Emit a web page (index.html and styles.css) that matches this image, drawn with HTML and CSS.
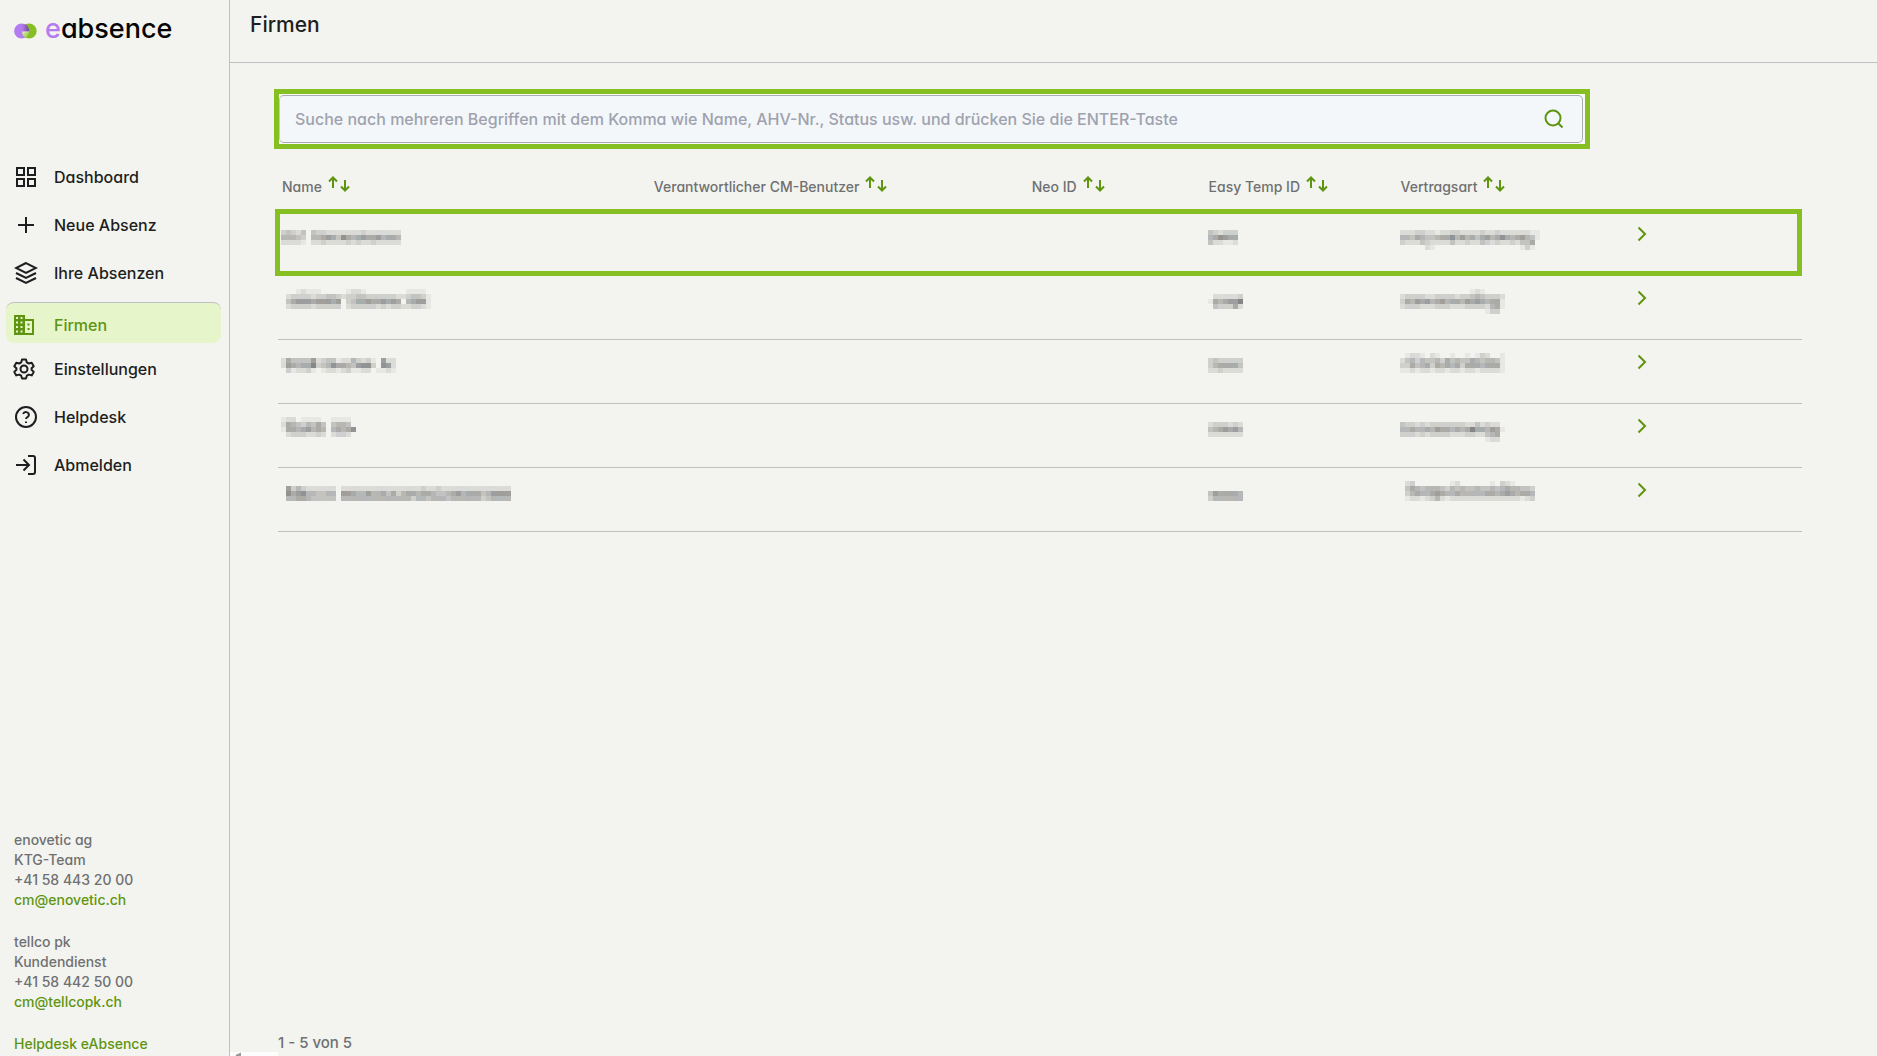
FILE: index.html
```html
<!DOCTYPE html>
<html lang="de">
<head>
<meta charset="utf-8">
<meta name="viewport" content="width=device-width, initial-scale=1">
<title>Firmen – eabsence</title>
<link rel="stylesheet" href="styles.css">
</head>
<body>
<svg class="defs" aria-hidden="true">
  <symbol id="sort" viewBox="0 0 22 16">
    <path d="M5 12V1.500M1 5.500l4-4 4 4M17 4v10.500M13 10.500l4 4 4-4" fill="none" stroke="currentColor" stroke-width="2"/>
  </symbol>
  <symbol id="chevron" viewBox="0 0 10 16">
    <path d="M1.500 1.500L8 8l-6.500 6.500" fill="none" stroke="currentColor" stroke-width="2"/>
  </symbol>
</svg>
<div class="app">
  <aside class="sidebar">
    <a class="logo" href="#" aria-label="eabsence">
      <svg class="logo-mark" viewBox="0 0 23 16" aria-hidden="true">
        <defs>
          <linearGradient id="shade" x1="0" y1="0" x2="1" y2="0"><stop offset="0" stop-color="#b57bf0"/><stop offset="1" stop-color="#6d4a8c"/></linearGradient>
          <linearGradient id="shine" x1="0" y1="0" x2="1" y2="1"><stop offset="0" stop-color="#e4f0c4"/><stop offset="1" stop-color="#86bf21"/></linearGradient>
        </defs>
        <circle cx="15.200" cy="8" r="7.500" fill="#86bf21"/>
        <circle cx="7.600" cy="8" r="7.500" fill="#b57bf0"/>
        <path d="M8 8V1.500h4Q15 4 15 8z" fill="url(#shade)"/>
        <path d="M8 8.500h7q0 4-3.500 6.500Q8 12.500 8 8.500z" fill="url(#shine)"/>
      </svg>
      <span class="logo-text"><span class="logo-e">e</span>absence</span>
    </a>
    <nav class="nav">
      <a class="nav-item" href="#"><svg class="nav-icon" viewBox="0 0 24 24"><path d="M3 3h7v7H3zM14 3h7v7h-7zM14 14h7v7h-7zM3 14h7v7H3z"/></svg>Dashboard</a>
      <a class="nav-item" href="#"><svg class="nav-icon" viewBox="0 0 24 24"><path d="M12 4v16M4 12h16"/></svg>Neue Absenz</a>
      <a class="nav-item" href="#"><svg class="nav-icon" viewBox="0 0 24 24"><path d="M12 2L2 7l10 5 10-5zM2 17l10 5 10-5M2 12l10 5 10-5"/></svg>Ihre Absenzen</a>
      <a class="nav-item active" href="#" aria-current="page"><svg class="nav-icon wide-left" viewBox="0 0 24 24"><path class="solid" fill-rule="evenodd" d="M2 2h11v4h9v16H2zM4 4v2h2V4zM8.500 4v2h2V4zM4 8.500v2h2v-2zM8.500 8.500v2h2v-2zM4 13v2h2v-2zM8.500 13v2h2v-2zM4 17.500v2h2v-2zM8.500 17.500v2h2v-2zM13 8v12h7V8zM15.500 10.500h2v2h-2zM15.500 15h2v2h-2z"/></svg>Firmen</a>
      <a class="nav-item" href="#"><svg class="nav-icon wide-left" viewBox="0 0 24 24"><circle cx="12" cy="12" r="3.500"/><path d="M10 2.500h4l.8 2.900 2 1.100 2.900-.8 2 3.500-2.100 2.100v1.500l2.100 2.100-2 3.500-2.900-.8-2 1.100-.8 2.800h-4l-.8-2.800-2-1.100-2.900.8-2-3.500 2.100-2.100v-1.500L2.300 9.200l2-3.500 2.900.8 2-1.100z" stroke-linejoin="round"/></svg>Einstellungen</a>
      <a class="nav-item" href="#"><svg class="nav-icon" viewBox="0 0 24 24"><circle cx="12" cy="12" r="10"/><path d="M9.100 9a3 3 0 0 1 5.800 1c0 2-2.900 2.500-2.900 4M12 16.500v1.500"/></svg>Helpdesk</a>
      <a class="nav-item" href="#"><svg class="nav-icon" viewBox="0 0 24 24"><path d="M14 3h5a2 2 0 0 1 2 2v14a2 2 0 0 1-2 2h-5M9.500 6.500L15 12l-5.500 5.500M2 12h13"/></svg>Abmelden</a>
    </nav>
    <footer class="contacts">
      <address>enovetic ag<br>KTG-Team<br>+41 58 443 20 00<br><a href="mailto:cm@enovetic.ch">cm@enovetic.ch</a></address>
      <address>tellco pk<br>Kundendienst<br>+41 58 442 50 00<br><a href="mailto:cm@tellcopk.ch">cm@tellcopk.ch</a></address>
      <a href="#">Helpdesk eAbsence</a>
    </footer>
  </aside>
  <div class="main">
    <header class="topbar"><h1>Firmen</h1></header>
    <main class="content">
      <form class="search" role="search">
        <div class="search-field">
          <input type="search" aria-label="Suche" placeholder="Suche nach mehreren Begriffen mit dem Komma wie Name, AHV-Nr., Status usw. und drücken Sie die ENTER-Taste">
          <button class="search-button" type="submit" aria-label="Suchen"><svg viewBox="0 0 20 20"><circle cx="9" cy="9" r="7.500"/><path d="M14.500 14.500l4 4"/></svg></button>
        </div>
      </form>
      <table class="firms">
        <colgroup><col class="c-name"><col class="c-user"><col class="c-neo"><col class="c-easy"><col class="c-type"><col></colgroup>
        <thead>
          <tr>
            <th><button type="button">Name<svg><use href="#sort"/></svg></button></th>
            <th><button type="button">Verantwortlicher CM-Benutzer<svg><use href="#sort"/></svg></button></th>
            <th><button type="button">Neo ID<svg><use href="#sort"/></svg></button></th>
            <th><button type="button">Easy Temp ID<svg><use href="#sort"/></svg></button></th>
            <th><button type="button">Vertragsart<svg><use href="#sort"/></svg></button></th>
            <th></th>
          </tr>
        </thead>
        <tbody>
          <tr class="marked">
            <td><svg class="mosaic" data-cells="/343240433222222232222222/555430556764865676675665/222210223222232322322222"></svg></td><td></td><td></td>
            <td><svg class="mosaic" data-cells="/432333/568766/422112"></svg></td>
            <td><svg class="mosaic" data-cells="/2223322122332222322322222211/5546544566857564675686567541/3222432222422322432322324460/0000021000000000000000001310"></svg></td>
            <td><button class="open" type="button" aria-label="Firma öffnen"><svg><use href="#chevron"/></svg></button></td>
          </tr>
          <tr>
            <td><svg class="mosaic" data-cells="000121110000012210000000011110/023333233443233443333332234431/046777677767034667667676056771/023333233333023333323233223321"></svg></td><td></td><td></td>
            <td><svg class="mosaic" data-cells="/0222223/1656779/0433362"></svg></td>
            <td><svg class="mosaic" data-cells="000000000000001210000/233332233332334543332/365767567566576765661/233322233322233332561/000000000000000001330"></svg></td>
            <td><button class="open" type="button" aria-label="Firma öffnen"><svg><use href="#chevron"/></svg></button></td>
          </tr>
          <tr>
            <td><svg class="mosaic" data-cells="/26444472344122532310722/27656693458665478830872/03122310122123112201121"></svg></td><td></td><td></td>
            <td><svg class="mosaic" data-cells="/3433333/3566664/2232222"></svg></td>
            <td><svg class="mosaic" data-cells="012210210010010132001/245354453645446545541/336456365656366656661/112122122122122122221"></svg></td>
            <td><button class="open" type="button" aria-label="Firma öffnen"><svg><use href="#chevron"/></svg></button></td>
          </tr>
          <tr>
            <td><svg class="mosaic" data-cells="122011110011110/265435464045540/166567565056568/023332232023320"></svg></td><td></td><td></td>
            <td><svg class="mosaic" data-cells="/2333232/4567675/2222222"></svg></td>
            <td><svg class="mosaic" data-cells="/433232333333322423220/556556576656569665761/333232333322233224560/000000000000000001220"></svg></td>
            <td><button class="open" type="button" aria-label="Firma öffnen"><svg><use href="#chevron"/></svg></button></td>
          </tr>
          <tr>
            <td><svg class="mosaic" data-cells="/0735322222202222222222222222322322222222222222/0867855445507765575564635665665445675666457777/0556654444405555555555555535545554555555345555"></svg></td><td></td><td></td>
            <td><svg class="mosaic" data-cells="//4766665/3555555"></svg></td>
            <td><svg class="mosaic" data-cells="0230000000120000001032100000/0465455543545445445456554430/0356556765565555566567656650/0122123521222222222222221230"></svg></td>
            <td><button class="open" type="button" aria-label="Firma öffnen"><svg><use href="#chevron"/></svg></button></td>
          </tr>
        </tbody>
      </table>
      <p class="count">1 - 5 von 5</p>
    </main>
  </div>
</div>
<div class="status-tip" aria-hidden="true"><svg viewBox="0 0 12 4"><path d="M3 4q2-1 4-2v2" fill="none" stroke="#999" stroke-width="2"/></svg></div>
<script src="script.js"></script>
</body>
</html>
```
FILE: styles.css
```css
* { box-sizing: border-box; }

body {
  margin: 0;
  background: #f3f4ef;
  color: #1d1e20;
  font-family: Inter, "Liberation Sans", sans-serif;
  font-feature-settings: "cv11";
  font-size: 16px;
}

a { text-decoration: none; }
button, input { font: inherit; font-feature-settings: inherit; }
button { border: 0; padding: 0; background: none; cursor: pointer; }
.defs { display: none; }

.app { display: flex; min-height: 100vh; }

.sidebar {
  flex: 0 0 230px;
  display: flex;
  flex-direction: column;
  border-right: 1px solid #bfc0c4;
}

.logo {
  display: flex;
  align-items: center;
  gap: 8px;
  height: 58px;
  margin-bottom: 95px;
  padding: 4px 14px 0;
  color: #050505;
}
.logo-mark { width: 23px; height: 16px; }
.logo-text { font-size: 27px; font-weight: 500; line-height: 32px; margin-top: -4px; }
.logo-e { color: #b57bf0; }

.nav-item {
  display: flex;
  align-items: center;
  gap: 16px;
  height: 48px;
  padding-left: 14px;
  color: inherit;
  font-weight: 500;
}
.nav-icon {
  flex: none;
  width: 24px;
  height: 24px;
  fill: none;
  stroke: currentColor;
  stroke-width: 2;
}
.nav-icon.wide-left { margin-left: -2px; margin-right: 2px; }
.nav-icon .solid { fill: currentColor; stroke: none; }
.nav-item.active {
  height: 41px;
  margin: 5px 8px 2px 6px;
  padding-left: 8px;
  padding-top: 4px;
  border-top: 1px solid #bfc0c4;
  border-radius: 8px;
  background: #e6f5ca;
  color: #5f9410;
}

.contacts {
  margin-top: auto;
  padding: 40px 14px 2px;
  color: #6f7071;
  font-size: 14px;
  font-weight: 500;
  line-height: 20px;
}
.contacts address { margin-bottom: 22px; font-style: normal; }
.contacts a { color: #5f9410; }

.main { flex: 1; min-width: 0; display: flex; flex-direction: column; }

.topbar { height: 63px; padding: 10px 20px; border-bottom: 1px solid #bfc0c4; }
.topbar h1 { margin: 0; font-size: 21px; font-weight: 500; line-height: 30px; }

.content {
  flex: 1;
  display: flex;
  flex-direction: column;
  padding: 26px 75px 3px 48px;
}

.search {
  width: 86.35%;
  height: 60px;
  margin-left: -4px;
  border: 5px solid #86bf21;
  background: #f9faf8;
  padding: 1px 2px 1px 0;
}
.search-field {
  display: flex;
  height: 48px;
  border: 1px solid #aaabb0;
  border-left-color: #c8c9cc;
  border-radius: 5px;
  background: #f3f7fa;
}
.search-field input {
  flex: 1;
  min-width: 0;
  padding: 0 15px;
  border: 0;
  outline: 0;
  background: none;
  font-weight: 500;
}
.search-field input::placeholder { color: #9fa2ae; opacity: 1; }
.search-button { padding-right: 18px; color: #5f9410; }
.search-button svg {
  display: block;
  width: 20px;
  height: 20px;
  fill: none;
  stroke: currentColor;
  stroke-width: 2;
}

.firms {
  width: 100%;
  margin-top: 14px;
  border-collapse: separate;
  border-spacing: 0;
  table-layout: fixed;
}
.c-name { width: 24.4%; }
.c-user { width: 24.8%; }
.c-neo { width: 11.6%; }
.c-easy { width: 12.6%; }
.c-type { width: 15.5%; }

.firms th {
  height: 49px;
  padding: 11px 4px 0;
  text-align: left;
  font-weight: normal;
  vertical-align: top;
}
.firms th button {
  display: flex;
  align-items: flex-start;
  gap: 6px;
  padding-top: 3px;
  color: #6f7071;
  font-size: 14px;
  font-weight: 500;
  line-height: 20px;
  white-space: nowrap;
}
.firms th svg { width: 22px; height: 16px; margin-top: -1px; color: #5f9410; }

.firms td {
  height: 64px;
  padding: 13px 3px 0;
  border-bottom: 1px solid #bfc0c4;
  vertical-align: top;
}
.marked { position: relative; }
.firms .marked td { border-bottom-color: transparent; }
.marked td:first-child::after {
  content: "";
  position: absolute;
  inset: -3px 0 0 -3px;
  border: 5px solid #86bf21;
  pointer-events: none;
}
.mosaic { display: block; }
.open { display: block; margin-top: 1px; padding-left: 1px; color: #5f9410; }
.open svg { display: block; width: 10px; height: 16px; }

.count {
  margin: auto 0 0;
  color: #6f7071;
  font-size: 15px;
  font-weight: 500;
  line-height: 20px;
}

.status-tip {
  position: fixed;
  bottom: 0;
  left: 230px;
  width: 48px;
  height: 4px;
  background: #fdfdfd;
}
.status-tip svg { display: block; width: 12px; height: 4px; margin-left: 3px; }
```
FILE: script.js
```js
// Draws the pixelated values of the table: one digit per 5px cell, 0 = empty, 9 = darkest.
const CELL = 5;
const TINTS = ["104,98,92", "98,98,98", "92,100,108", "98,96,100"];

document.querySelectorAll(".mosaic").forEach((svg) => {
  const rows = svg.dataset.cells.split("/");
  const columns = Math.max(...rows.map((row) => row.length));
  svg.setAttribute("width", columns * CELL);
  svg.setAttribute("height", rows.length * CELL);
  svg.setAttribute("shape-rendering", "crispEdges");
  svg.innerHTML = rows.map((row, y) => [...row].map((digit, x) => {
    if (digit === "0") return "";
    const tint = TINTS[(x * 3 + y * 5 + (x >> 2)) % TINTS.length];
    return `<rect x="${x * CELL}" y="${y * CELL}" width="${CELL}" height="${CELL}" fill="rgba(${tint},${digit / 12})"/>`;
  }).join("")).join("");
});
```
